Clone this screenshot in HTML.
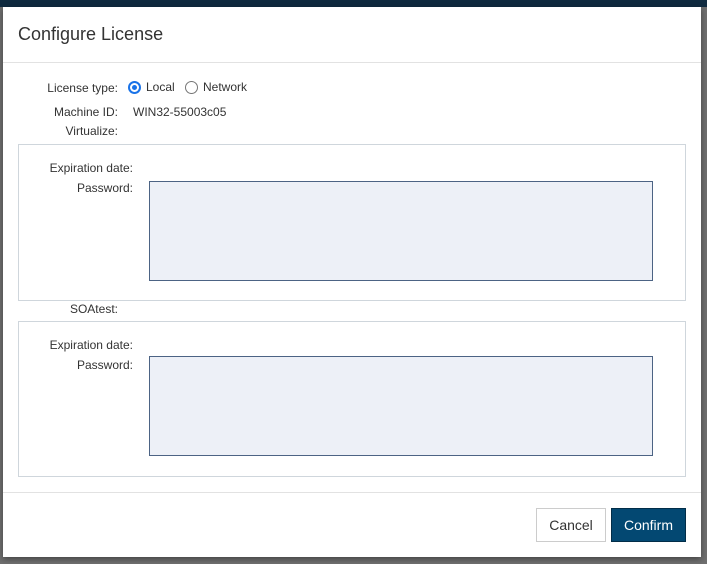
<!DOCTYPE html>
<html><head><style>
*{box-sizing:border-box;margin:0;padding:0}
body{width:707px;height:564px;overflow:hidden;background:#6f6f6f;font-family:"Liberation Sans",Arial,sans-serif;position:relative}
.top{position:absolute;left:0;top:0;width:707px;height:7px;background:#0f2a3f}
.dlg{position:absolute;left:3px;top:7px;width:698px;height:550px;background:#fff;box-shadow:0 2px 6px rgba(0,0,0,.4)}
.title{position:absolute;left:15px;top:17px;font-size:18px;color:#333}
.hr1{position:absolute;left:0;top:55px;width:698px;height:1px;background:#e2e2e2}
.lbl{position:absolute;font-size:12px;color:#333;text-align:right}
.val{position:absolute;font-size:12px;color:#333}
.box{position:absolute;left:15px;width:668px;border:1px solid #cfd6dc}
.pw{position:absolute;left:130px;width:504px;height:100px;background:#edf0f7;border:1px solid #4c6384}
.radio{position:absolute;width:13px;height:13px;border-radius:50%;border:1px solid #767676;background:#fff}
.radio.on{border:2px solid #1a73e8}
.radio.on::after{content:"";position:absolute;left:2px;top:2px;width:5px;height:5px;border-radius:50%;background:#1a73e8}
.hr2{position:absolute;left:0;top:485px;width:698px;height:1px;background:#e2e2e2}
.btn{position:absolute;top:501px;height:34px;font-size:14px;text-align:center;line-height:32px}
</style></head><body>
<div class="top"></div>
<div class="dlg">
<div class="title">Configure License</div>
<div class="hr1"></div>
<div class="lbl" style="right:583px;top:74px">License type:</div>
<div class="radio on" style="left:125px;top:74px"></div>
<div class="val" style="left:143px;top:73px">Local</div>
<div class="radio" style="left:182px;top:74px"></div>
<div class="val" style="left:200px;top:73px">Network</div>
<div class="lbl" style="right:583px;top:98px">Machine ID:</div>
<div class="val" style="left:130px;top:98px">WIN32-55003c05</div>
<div class="lbl" style="right:583px;top:117px">Virtualize:</div>
<div class="box" style="top:137px;height:157px">
 <div class="lbl" style="right:552px;top:16px">Expiration date:</div>
 <div class="lbl" style="right:552px;top:36px">Password:</div>
 <div class="pw" style="top:36px"></div>
</div>
<div class="lbl" style="right:583px;top:295px">SOAtest:</div>
<div class="box" style="top:314px;height:156px">
 <div class="lbl" style="right:552px;top:16px">Expiration date:</div>
 <div class="lbl" style="right:552px;top:36px">Password:</div>
 <div class="pw" style="top:34px"></div>
</div>
<div class="hr2"></div>
<div class="btn" style="left:533px;width:70px;border:1px solid #ccc;color:#333;background:#fff">Cancel</div>
<div class="btn" style="left:608px;width:75px;background:#034872;border:1px solid #022d48;color:#fff">Confirm</div>
</div>
</body></html>
